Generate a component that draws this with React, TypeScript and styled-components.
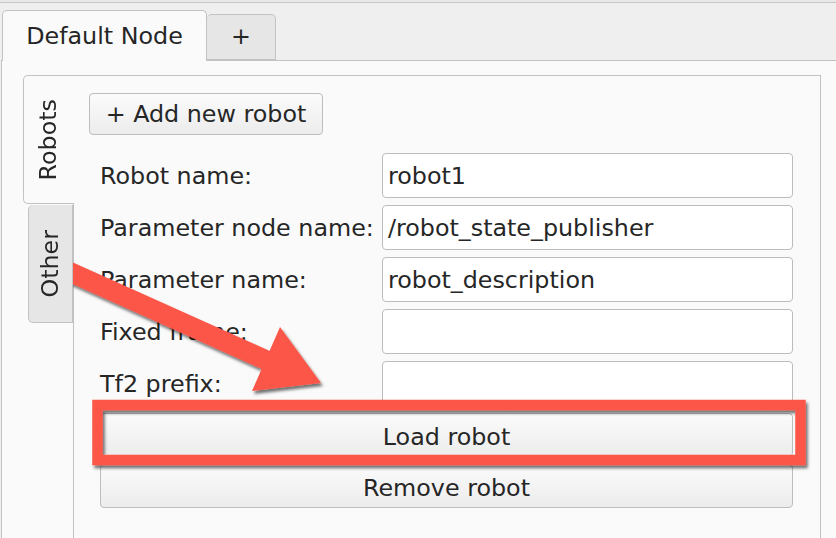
import React from "react";
import styled, { createGlobalStyle } from "styled-components";

const Global = createGlobalStyle`
  html, body { margin: 0; padding: 0; background: #efefef; }
  * { box-sizing: border-box; }
`;

const Root = styled.div`
  position: relative;
  width: 836px;
  height: 538px;
  overflow: hidden;
  background: #efefef;
  font-family: "DejaVu Sans", Verdana, sans-serif;
  font-size: 23.8px;
  color: #262626;
`;

const TopEdge = styled.div`
  height: 3px;
  border-bottom: 1px solid #c6c6c6;
  background: #e8e8e8;
`;

const TabBar = styled.div`
  display: flex;
  align-items: flex-end;
  height: 57px;
  padding-left: 2px;
`;

const Tab = styled.div<{ $active?: boolean }>`
  position: relative;
  z-index: ${(p) => (p.$active ? 2 : 1)};
  display: flex;
  align-items: center;
  justify-content: center;
  white-space: nowrap;
  height: ${(p) => (p.$active ? "51px" : "46px")};
  width: ${(p) => (p.$active ? "205px" : "69px")};
  margin-bottom: ${(p) => (p.$active ? "-1px" : "0")};
  padding-bottom: ${(p) => (p.$active ? "0" : "2px")};
  background: ${(p) => (p.$active ? "#fafafa" : "#e6e6e6")};
  border: 1px solid #c2c2c2;
  border-bottom: ${(p) => (p.$active ? "none" : "1px solid #c2c2c2")};
  border-left: ${(p) => (p.$active ? "1px solid #c2c2c2" : "none")};
  border-radius: 5px 5px 0 0;
`;

const OuterPane = styled.div`
  width: 860px;
  height: 480px;
  margin-left: 1px;
  border: 1px solid #c2c2c2;
  background: #fafafa;
  padding: 14px 0 0 21px;
`;

const Inner = styled.div`
  display: flex;
  width: 798px;
  height: 470px;
`;

const VTabs = styled.div`
  display: flex;
  flex-direction: column;
  align-items: flex-end;
  width: 50px;
  gap: 1px;
`;

const VTab = styled.div<{ $active?: boolean }>`
  position: relative;
  z-index: ${(p) => (p.$active ? 2 : 1)};
  display: flex;
  align-items: center;
  justify-content: center;
  width: ${(p) => (p.$active ? "51px" : "45px")};
  height: ${(p) => (p.$active ? "129px" : "118px")};
  margin-right: ${(p) => (p.$active ? "-1px" : "0")};
  background: ${(p) => (p.$active ? "#fafafa" : "#e6e6e6")};
  border: 1px solid #c2c2c2;
  border-right: ${(p) => (p.$active ? "none" : "1px solid #c2c2c2")};
  border-top: ${(p) => (p.$active ? "1px solid #c2c2c2" : "none")};
  border-radius: 5px 0 0 5px;
`;

const VLabel = styled.span`
  writing-mode: vertical-rl;
  transform: rotate(180deg);
  line-height: 1;
`;

const Pane = styled.div`
  flex: 1;
  display: flex;
  flex-direction: column;
  align-items: flex-start;
  border: 1px solid #c2c2c2;
  background: #fafafa;
  padding: 17px 27px 0 15px;
`;

const Button = styled.button<{ $wide?: boolean }>`
  display: flex;
  align-items: center;
  justify-content: center;
  white-space: nowrap;
  height: ${(p) => (p.$wide ? "44px" : "42px")};
  padding: ${(p) => (p.$wide ? "3px 0 0" : "0")};
  font: inherit;
  color: #262626;
  background: linear-gradient(#fbfbfb, #ececec);
  border: 1px solid #bdbdbd;
  border-radius: 4px;
  grid-column: ${(p) => (p.$wide ? "1 / span 2" : "auto")};
  width: ${(p) => (p.$wide ? "100%" : "234px")};
`;

const Form = styled.div`
  align-self: stretch;
  display: grid;
  grid-template-columns: 275px 1fr;
  column-gap: 7px;
  row-gap: 7px;
  margin: 18px 0 0 11px;
`;

const Label = styled.div`
  display: flex;
  align-items: center;
  height: 45px;
  white-space: nowrap;
`;

const Input = styled.div`
  display: flex;
  align-items: center;
  height: 45px;
  padding-left: 5px;
  background: #ffffff;
  border: 1px solid #bcbcbc;
  border-radius: 4px;
  white-space: nowrap;
`;

const Overlay = styled.svg`
  position: absolute;
  left: 0;
  top: 0;
  pointer-events: none;
`;

const rows: [string, string][] = [
  ["Robot name:", "robot1"],
  ["Parameter node name:", "/robot_state_publisher"],
  ["Parameter name:", "robot_description"],
  ["Fixed frame:", ""],
  ["Tf2 prefix:", ""],
];

export default function App() {
  return (
    <Root>
      <Global />
      <TopEdge />
      <TabBar>
        <Tab $active>Default Node</Tab>
        <Tab>+</Tab>
      </TabBar>
      <OuterPane>
        <Inner>
          <VTabs>
            <VTab $active>
              <VLabel>Robots</VLabel>
            </VTab>
            <VTab>
              <VLabel>Other</VLabel>
            </VTab>
          </VTabs>
          <Pane>
            <Button>+ Add new robot</Button>
            <Form>
              {rows.map(([l, v]) => (
                <React.Fragment key={l}>
                  <Label>{l}</Label>
                  <Input>{v}</Input>
                </React.Fragment>
              ))}
              <Button $wide>Load robot</Button>
              <Button $wide>Remove robot</Button>
            </Form>
          </Pane>
        </Inner>
      </OuterPane>
      <Overlay width="836" height="538" viewBox="0 0 836 538">
        <defs>
          <filter id="sh" x="-10%" y="-10%" width="120%" height="130%">
            <feDropShadow dx="2" dy="3" stdDeviation="1.8" floodColor="#000" floodOpacity="0.55" />
          </filter>
        </defs>
        <g filter="url(#sh)">
          <rect x="97.5" y="405" width="703" height="55" fill="none" stroke="#fc574a" strokeWidth="10.5" />
          <line x1="70" y1="272" x2="268" y2="361" stroke="#fc574a" strokeWidth="20" strokeLinecap="round" />
          <polygon points="280,327 321,383 252,391" fill="#fc574a" />
        </g>
      </Overlay>
    </Root>
  );
}
